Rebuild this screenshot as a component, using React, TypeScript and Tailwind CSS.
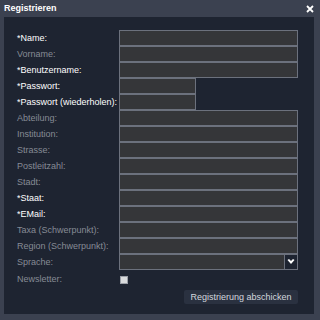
import React from "react";

type Field = { label: string; required?: boolean; short?: boolean; select?: boolean };

const fields: Field[] = [
  { label: "Name:", required: true },
  { label: "Vorname:" },
  { label: "Benutzername:", required: true },
  { label: "Passwort:", required: true, short: true },
  { label: "Passwort (wiederholen):", required: true, short: true },
  { label: "Abteilung:" },
  { label: "Institution:" },
  { label: "Strasse:" },
  { label: "Postleitzahl:" },
  { label: "Stadt:" },
  { label: "Staat:", required: true },
  { label: "EMail:", required: true },
  { label: "Taxa (Schwerpunkt):" },
  { label: "Region (Schwerpunkt):" },
  { label: "Sprache:", select: true },
];

export default function App() {
  return (
    <div
      className="w-[320px] h-[320px] bg-[#3b4150] overflow-hidden"
      style={{ fontFamily: '"Liberation Sans", Arial, sans-serif' }}
    >
      {/* Title bar */}
      <div className="h-[17px] flex items-center justify-between pl-[4px] pr-[6px]">
        <span className="text-[9px] font-bold text-white leading-none">Registrieren</span>
        <svg width="8" height="8" viewBox="0 0 8 8">
          <path d="M1 1 L7 7 M7 1 L1 7" stroke="#ffffff" strokeWidth="1.8" />
        </svg>
      </div>

      {/* Panel */}
      <div className="ml-[4px] w-[310px] h-[297px] bg-[#1e2431] pt-[13px] pl-[13px]">
        <div className="grid grid-cols-[102px_179px]">
          {fields.map((f) => (
            <React.Fragment key={f.label}>
              <div
                className={
                  "h-[16px] flex items-center text-[9px] leading-none " +
                  (f.required ? "text-white" : "text-[#868b95]")
                }
              >
                {f.required ? "*" : ""}
                {f.label}
              </div>
              <div className="h-[16px] flex">
                <div
                  className={
                    "h-[16px] bg-[#353639] border border-[#6c717d] flex justify-end " +
                    (f.short ? "w-[77px]" : "w-[179px]")
                  }
                >
                  {f.select && (
                    <div className="w-[13px] h-full border-l border-[#6c717d] bg-[#1e2431] flex items-center justify-center">
                      <svg width="8" height="6" viewBox="0 0 8 6">
                        <path d="M0.5 1 L2 0 L4 2 L6 0 L7.5 1 L4 5 Z" fill="#ffffff" />
                      </svg>
                    </div>
                  )}
                </div>
              </div>
            </React.Fragment>
          ))}
          <div className="h-[19px] flex items-center text-[9px] leading-none text-[#868b95]">
            Newsletter:
          </div>
          <div className="h-[19px] flex items-center pl-[1px]">
            <div className="w-[8px] h-[8px] bg-[#d9dadc] border border-[#9a9ea6]" />
          </div>
        </div>
        <div className="w-[281px] flex justify-end mt-[1px]">
          <button className="h-[14px] w-[114px] rounded-[2px] bg-[#2a3140] text-[9px] leading-none text-[#d3d7de]">
            Registrierung abschicken
          </button>
        </div>
      </div>
    </div>
  );
}
